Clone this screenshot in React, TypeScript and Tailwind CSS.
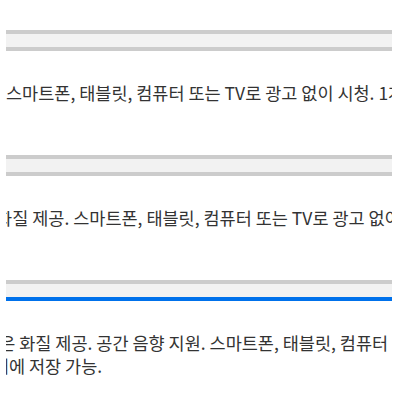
const plans = [
  {
    id: 'basic',
    selected: false,
    offset: 'ml-0',
    lines: ['스마트폰, 태블릿, 컴퓨터 또는 TV로 광고 없이 시청. 1개의 디바이스에서 동시 시청 가능.'],
  },
  {
    id: 'standard',
    selected: false,
    offset: 'ml-[-46px]',
    lines: ['좋은 화질 제공. 스마트폰, 태블릿, 컴퓨터 또는 TV로 광고 없이 시청.'],
  },
  {
    id: 'premium',
    selected: true,
    offset: 'ml-[-59px]',
    lines: [
      '가장 좋은 화질 제공. 공간 음향 지원. 스마트폰, 태블릿, 컴퓨터 또는 TV로 광고 없이 시청.',
      '이스 6대에 저장 가능.',
    ],
  },
];

function PlanBar({ selected }: { selected: boolean }) {
  return (
    <div
      className={`h-[21px] bg-[#f2f2f2] border-t-4 border-b-4 border-t-[#cccccc] ${
        selected ? 'border-b-[#0071eb]' : 'border-b-[#cccccc]'
      }`}
    />
  );
}

export default function App() {
  return (
    <div className="w-[400px] h-[400px] overflow-hidden bg-white pt-[30px] pl-[6px] pr-[8px] font-['Noto_Sans_CJK_KR','Noto_Sans',sans-serif] text-[#333333]">
      {plans.map((plan) => (
        <section key={plan.id} className="pb-[51px]">
          <PlanBar selected={plan.selected} />
          <div className="overflow-hidden pt-[30px]">
            <p className={`${plan.offset} whitespace-nowrap text-[17.5px] leading-[23px]`}>
              {plan.lines.map((line, i) => (
                <span key={i} className="block">
                  {line}
                </span>
              ))}
            </p>
          </div>
        </section>
      ))}
    </div>
  );
}
